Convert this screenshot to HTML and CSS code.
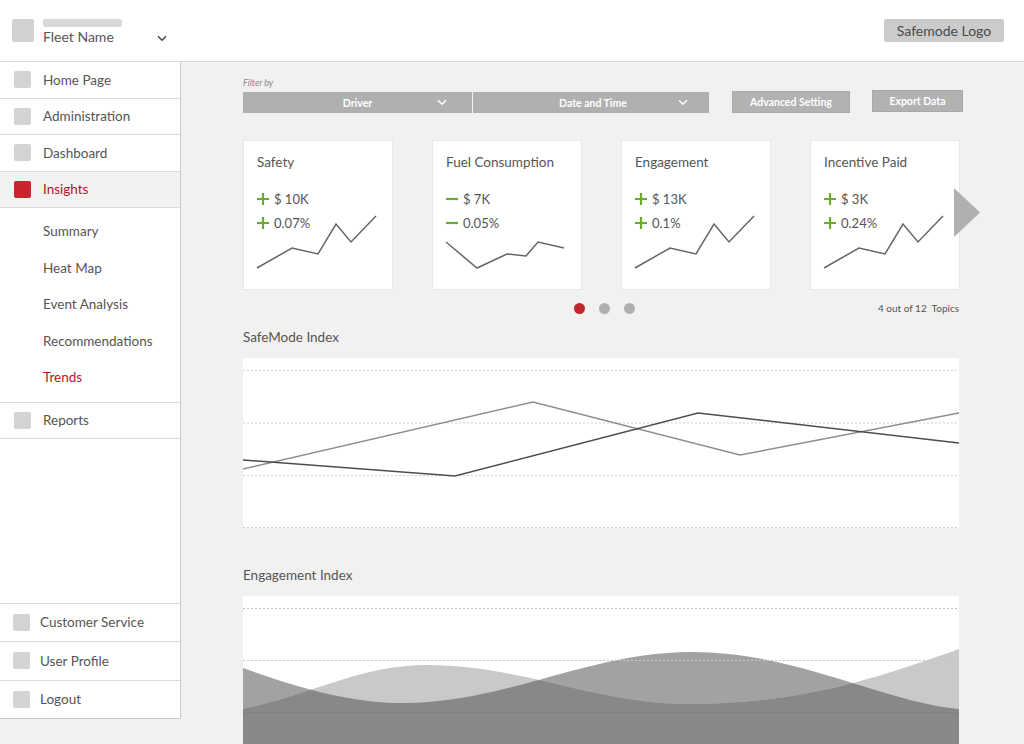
FILE: index.html
```html
<!DOCTYPE html>
<html lang="en">
<head>
<meta charset="utf-8">
<title>Insights - Trends</title>
<link rel="stylesheet" href="styles.css">
</head>
<body>
<header class="topbar">
  <div class="fleet">
    <span class="fleet-icon"></span>
    <div class="fleet-info">
      <span class="fleet-bar"></span>
      <span class="fleet-name">Fleet Name</span>
    </div>
    <svg class="fleet-chev" width="10" height="7" viewBox="0 0 10 7"><path d="M1 1.2L5 5.2L9 1.2" fill="none" stroke="#444" stroke-width="1.5"/></svg>
  </div>
  <div class="logo">Safemode Logo</div>
</header>

<div class="layout">
  <nav class="sidebar">
    <div class="nav-item"><span class="nav-icon"></span>Home Page</div>
    <div class="nav-item"><span class="nav-icon"></span>Administration</div>
    <div class="nav-item"><span class="nav-icon"></span>Dashboard</div>
    <div class="nav-item active"><span class="nav-icon"></span>Insights</div>
    <div class="sub-list">
      <div class="sub-item">Summary</div>
      <div class="sub-item">Heat Map</div>
      <div class="sub-item">Event Analysis</div>
      <div class="sub-item">Recommendations</div>
      <div class="sub-item current">Trends</div>
    </div>
    <div class="nav-item"><span class="nav-icon"></span>Reports</div>
    <div class="spacer"></div>
    <div class="bottom-item"><span class="nav-icon"></span>Customer Service</div>
    <div class="bottom-item"><span class="nav-icon"></span>User Profile</div>
    <div class="bottom-item"><span class="nav-icon"></span>Logout</div>
  </nav>

  <main class="main">
    <div class="content">
      <div class="toolbar">
        <div class="filter">
          <div class="filter-label">Filter by</div>
          <div class="dropdowns">
            <div class="dd dd-driver"><span class="dd-label">Driver</span><svg width="10" height="7" viewBox="0 0 10 7"><path d="M1 1.2L5 5.2L9 1.2" fill="none" stroke="#fff" stroke-width="1.5"/></svg></div>
            <div class="dd dd-date"><span class="dd-label">Date and Time</span><svg width="10" height="7" viewBox="0 0 10 7"><path d="M1 1.2L5 5.2L9 1.2" fill="none" stroke="#fff" stroke-width="1.5"/></svg></div>
          </div>
        </div>
        <div class="btn btn-adv">Advanced Setting</div>
        <div class="btn btn-export">Export Data</div>
      </div>

      <div class="cards-wrap">
        <div class="cards">
          <div class="card">
            <div class="card-text">
              <div class="card-title">Safety</div>
              <div class="val"><svg class="sign" width="12" height="12" viewBox="0 0 12 12"><path d="M6 0V12M0 6H12" stroke="#6aab2e" stroke-width="2.2"/></svg><span>$ 10K</span></div>
              <div class="val"><svg class="sign" width="12" height="12" viewBox="0 0 12 12"><path d="M6 0V12M0 6H12" stroke="#6aab2e" stroke-width="2.2"/></svg><span>0.07%</span></div>
            </div>
            <svg class="spark" width="148" height="148" viewBox="1 1 148 148"><polyline points="14,128 49,108 75,114 93,84 108,102 133,76" fill="none" stroke="#666" stroke-width="1.5"/></svg>
          </div>
          <div class="card">
            <div class="card-text">
              <div class="card-title">Fuel Consumption</div>
              <div class="val"><svg class="sign" width="12" height="12" viewBox="0 0 12 12"><path d="M0 6H12" stroke="#6aab2e" stroke-width="2.2"/></svg><span>$ 7K</span></div>
              <div class="val"><svg class="sign" width="12" height="12" viewBox="0 0 12 12"><path d="M0 6H12" stroke="#6aab2e" stroke-width="2.2"/></svg><span>0.05%</span></div>
            </div>
            <svg class="spark" width="148" height="148" viewBox="1 1 148 148"><polyline points="14,102 45,128 75,114 94,116 106,102 132,108" fill="none" stroke="#666" stroke-width="1.5"/></svg>
          </div>
          <div class="card">
            <div class="card-text">
              <div class="card-title">Engagement</div>
              <div class="val"><svg class="sign" width="12" height="12" viewBox="0 0 12 12"><path d="M6 0V12M0 6H12" stroke="#6aab2e" stroke-width="2.2"/></svg><span>$ 13K</span></div>
              <div class="val"><svg class="sign" width="12" height="12" viewBox="0 0 12 12"><path d="M6 0V12M0 6H12" stroke="#6aab2e" stroke-width="2.2"/></svg><span>0.1%</span></div>
            </div>
            <svg class="spark" width="148" height="148" viewBox="1 1 148 148"><polyline points="14,128 49,108 75,114 93,84 108,102 133,76" fill="none" stroke="#666" stroke-width="1.5"/></svg>
          </div>
          <div class="card">
            <div class="card-text">
              <div class="card-title">Incentive Paid</div>
              <div class="val"><svg class="sign" width="12" height="12" viewBox="0 0 12 12"><path d="M6 0V12M0 6H12" stroke="#6aab2e" stroke-width="2.2"/></svg><span>$ 3K</span></div>
              <div class="val"><svg class="sign" width="12" height="12" viewBox="0 0 12 12"><path d="M6 0V12M0 6H12" stroke="#6aab2e" stroke-width="2.2"/></svg><span>0.24%</span></div>
            </div>
            <svg class="spark" width="148" height="148" viewBox="1 1 148 148"><polyline points="14,128 49,108 75,114 93,84 108,102 133,76" fill="none" stroke="#666" stroke-width="1.5"/></svg>
          </div>
        </div>
        <svg class="next" width="26" height="49" viewBox="0 0 26 49"><polygon points="0,0 26,24.5 0,49" fill="#b0b0b0"/></svg>
      </div>

      <div class="pager">
        <span></span>
        <div class="dots"><span class="dot on"></span><span class="dot"></span><span class="dot"></span></div>
        <span class="topics">4 out of 12&nbsp; Topics</span>
      </div>

      <h2 class="section-title">SafeMode Index</h2>
      <div class="chart">
        <svg width="716" height="170" viewBox="0 0 716 170">
          <g stroke="#cfcfcf" stroke-width="1" stroke-dasharray="2 2">
            <line x1="0" y1="12.5" x2="716" y2="12.5"/>
            <line x1="0" y1="65" x2="716" y2="65"/>
            <line x1="0" y1="117.5" x2="716" y2="117.5"/>
            <line x1="0" y1="169.5" x2="716" y2="169.5"/>
          </g>
          <polyline points="0,111 290,44 497,97 716,55" fill="none" stroke="#8e8e8e" stroke-width="1.5"/>
          <polyline points="0,102 212,118 455,55 716,85" fill="none" stroke="#4d4d4d" stroke-width="1.5"/>
        </svg>
      </div>

      <h2 class="section-title second">Engagement Index</h2>
      <div class="chart">
        <svg width="716" height="170" viewBox="0 0 716 170">
          <defs>
            <clipPath id="w1clip"><path d="M0,72 C50,90 105,107 160,107 C264,107 345,56 449,56 C553,56 640,106 716,113 L716,170 L0,170 Z"/></clipPath>
          </defs>
          <path d="M0,72 C50,90 105,107 160,107 C264,107 345,56 449,56 C553,56 640,106 716,113 L716,170 L0,170 Z" fill="#a2a2a2"/>
          <path d="M0,113 C70,98 118,69 184,69 C279,69 352,108 447,108 C560,108 640,80 716,53 L716,170 L0,170 Z" fill="#c9c9c9"/>
          <path d="M0,113 C70,98 118,69 184,69 C279,69 352,108 447,108 C560,108 640,80 716,53 L716,170 L0,170 Z" fill="#888888" clip-path="url(#w1clip)"/>
          <g stroke="#c4c4c4" stroke-width="1" stroke-dasharray="2 2">
            <line x1="0" y1="12.5" x2="716" y2="12.5"/>
            <line x1="0" y1="64.5" x2="716" y2="64.5"/>
          </g>
          <line x1="0" y1="116.5" x2="716" y2="116.5" stroke="#7a7a7a" stroke-width="1" stroke-dasharray="2 2"/>
        </svg>
      </div>
    </div>
  </main>
</div>
</body>
</html>
```

FILE: styles.css
```css
* { box-sizing: border-box; margin: 0; padding: 0; }
html, body { background: #f1f1f1; }
body {
  font-family: Lato, "Open Sans", "Liberation Sans", sans-serif;
  color: #555;
  width: 1024px;
}

/* Top bar */
.topbar {
  height: 62px;
  background: #fff;
  border-bottom: 1px solid #d9d9d9;
  display: flex;
  justify-content: space-between;
  align-items: flex-start;
  padding: 19px 20px 0 12px;
}
.fleet { display: flex; align-items: flex-start; }
.fleet-icon { width: 22px; height: 23px; background: #d2d2d2; border-radius: 2px; }
.fleet-info { display: flex; flex-direction: column; margin-left: 9px; width: 114px; }
.fleet-bar { width: 79px; height: 8px; background: #d9d9d9; border-radius: 2px; }
.fleet-name { font-size: 14px; line-height: 16px; margin-top: 2px; color: #555; }
.fleet-chev { margin-top: 16px; }
.logo {
  width: 120px; height: 23px;
  background: #cbcbcb; border-radius: 2px;
  font-size: 14px; line-height: 23px; text-align: center; color: #4a4a4a;
}

/* Layout */
.layout { display: flex; align-items: flex-start; }

/* Sidebar */
.sidebar {
  width: 181px; height: 657px; flex-shrink: 0;
  background: #fff;
  border-right: 1px solid #c9c9c9;
  border-bottom: 1px solid #c9c9c9;
  display: flex; flex-direction: column;
}
.nav-item {
  display: flex; align-items: center;
  height: 36.5px; flex-shrink: 0;
  border-bottom: 1px solid #dadada;
  padding-left: 14px;
  font-size: 13.5px; color: #555;
}
.nav-icon { width: 17px; height: 17px; background: #d3d3d3; border-radius: 2px; margin-right: 12px; flex-shrink: 0; }
.nav-item.active { background: #f2f2f2; color: #b3141d; }
.nav-item.active .nav-icon { background: #c7262f; }
.sub-list { padding: 5px 0 6px; border-bottom: 1px solid #dadada; flex-shrink: 0; }
.sub-item { height: 36.5px; display: flex; align-items: center; padding-left: 43px; font-size: 13.5px; color: #555; }
.sub-item.current { color: #b3141d; }
.spacer { flex: 1; }
.bottom-item {
  display: flex; align-items: center;
  height: 38.5px; flex-shrink: 0;
  border-top: 1px solid #dadada;
  padding-left: 13px;
  font-size: 13.5px; color: #555;
}
.bottom-item .nav-icon { margin-right: 10px; }

/* Main */
.main { flex: 1; padding: 15px 0 0 62px; }
.content { width: 717px; }

.toolbar { display: flex; align-items: flex-end; }
.filter { flex-shrink: 0; }
.filter-label { font-size: 9px; line-height: 11px; font-style: italic; color: #888; margin-bottom: 4px; }
.dropdowns { display: flex; gap: 1px; }
.dd {
  height: 21px; background: #b0b0b0; color: #fff;
  display: flex; align-items: center; padding: 0 25px;
  font-size: 10.5px; font-weight: 700;
}
.dd-driver { width: 229px; }
.dd-date { width: 236px; padding-right: 21px; }
.dd-label { flex: 1; text-align: center; padding-left: 10px; }
.btn {
  height: 22px; background: #b2b2b2; color: #fff; flex-shrink: 0;
  font-size: 10.5px; font-weight: 700; line-height: 20px; text-align: center;
  border: 1px solid #a9a9a9;
}
.btn-adv { width: 118px; margin-left: 23px; }
.btn-export { width: 91px; margin-left: 22px; margin-bottom: 1px; }

/* Cards */
.cards-wrap { position: relative; margin-top: 27px; }
.cards { display: flex; gap: 39px; }
.card {
  width: 150px; height: 150px; flex-shrink: 0;
  background: #fff; border: 1px solid #e8e8e8;
  display: grid;
}
.card > * { grid-area: 1 / 1; }
.card-text { padding: 12px 0 0 13px; }
.card-title { font-size: 13.5px; line-height: 18px; color: #555; margin-bottom: 16px; }
.val { display: flex; align-items: center; height: 24px; font-size: 13px; color: #555; }
.sign { margin-right: 5px; }
.next { position: absolute; left: 711px; top: 48px; }

.pager {
  display: grid; grid-template-columns: 1fr auto 1fr; align-items: center;
  margin-top: 12px; height: 10px;
}
.dots { display: flex; gap: 14px; margin-left: 6px; }
.dot { width: 11px; height: 11px; border-radius: 50%; background: #b0b0b0; }
.dot.on { background: #c4262e; }
.topics { justify-self: end; font-size: 10px; color: #555; margin-right: 1px; }

.section-title { font-size: 13.5px; line-height: 16px; font-weight: 400; color: #555; margin-top: 17px; }
.section-title.second { margin-top: 39px; }
.chart { margin-top: 13px; width: 716px; height: 170px; background: #fff; }
.chart svg { display: block; }
```
